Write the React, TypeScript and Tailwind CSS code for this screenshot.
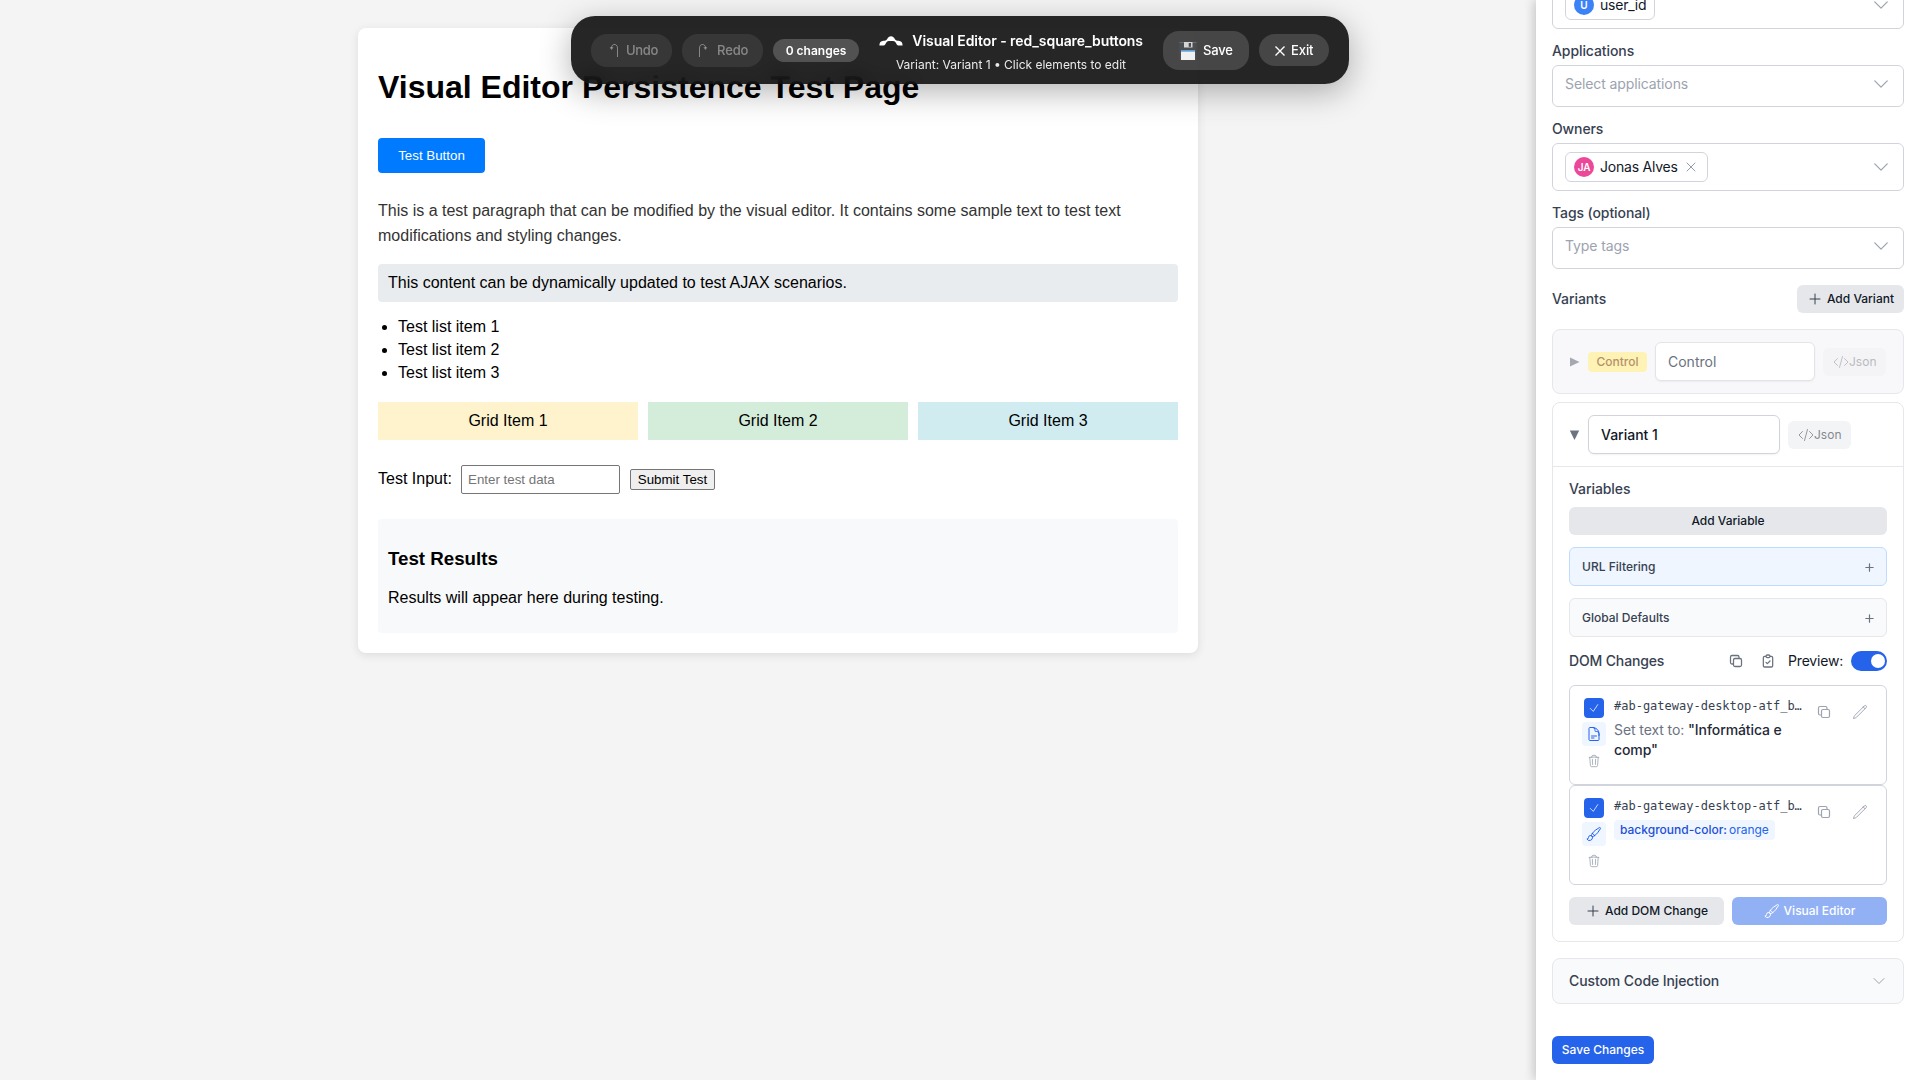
import type { ReactNode } from "react";

type IconProps = { d: string; className?: string; strokeWidth?: number };

function Icon({ d, className = "size-4", strokeWidth = 1.5 }: IconProps) {
  return (
    <svg
      viewBox="0 0 24 24"
      fill="none"
      stroke="currentColor"
      strokeWidth={strokeWidth}
      strokeLinecap="round"
      strokeLinejoin="round"
      className={`shrink-0 ${className}`}
    >
      <path d={d} />
    </svg>
  );
}

const paths = {
  chevron: "m19.5 8.25-7.5 7.5-7.5-7.5",
  close: "M6 18 18 6M6 6l12 12",
  plus: "M12 4.5v15m7.5-7.5h-15",
  smallPlus: "M12 4v16M4 12h16",
  code: "M17.25 6.75 22.5 12l-5.25 5.25m-10.5 0L1.5 12l5.25-5.25m7.5-3-4.5 16.5",
  copy: "M16.5 8.25V6a2.25 2.25 0 0 0-2.25-2.25H6A2.25 2.25 0 0 0 3.75 6v8.25A2.25 2.25 0 0 0 6 16.5h2.25m8.25-8.25H18a2.25 2.25 0 0 1 2.25 2.25V18A2.25 2.25 0 0 1 18 20.25h-7.5A2.25 2.25 0 0 1 8.25 18v-1.5m8.25-8.25h-6a2.25 2.25 0 0 0-2.25 2.25v6",
  clipboard:
    "M9 5H7a2 2 0 0 0-2 2v12a2 2 0 0 0 2 2h10a2 2 0 0 0 2-2V7a2 2 0 0 0-2-2h-2M9 5a2 2 0 0 0 2 2h2a2 2 0 0 0 2-2M9 5a2 2 0 0 1 2-2h2a2 2 0 0 1 2 2m-6 9 2 2 4-4",
  check: "m4.5 12.75 6 6 9-13.5",
  document:
    "M19.5 14.25v-2.625a3.375 3.375 0 0 0-3.375-3.375h-1.5A1.125 1.125 0 0 1 13.5 7.125v-1.5a3.375 3.375 0 0 0-3.375-3.375H8.25m0 12.75h7.5m-7.5 3H12M10.5 2.25H5.625c-.621 0-1.125.504-1.125 1.125v17.25c0 .621.504 1.125 1.125 1.125h12.75c.621 0 1.125-.504 1.125-1.125V11.25a9 9 0 0 0-9-9Z",
  brush:
    "M9.53 16.122a3 3 0 0 0-5.78 1.128 2.25 2.25 0 0 1-2.4 2.245 4.5 4.5 0 0 0 8.4-2.245c0-.399-.078-.78-.22-1.128Zm0 0a15.998 15.998 0 0 0 3.388-1.62m-5.043-.025a15.994 15.994 0 0 1 1.622-3.395m3.42 3.42a15.995 15.995 0 0 0 4.764-4.648l3.876-5.814a1.151 1.151 0 0 0-1.597-1.597L14.146 6.32a15.996 15.996 0 0 0-4.649 4.763m3.42 3.42a6.776 6.776 0 0 0-3.42-3.42",
  trash:
    "m14.74 9-.346 9m-4.788 0L9.26 9m9.968-3.21c.342.052.682.107 1.022.166m-1.022-.165L18.16 19.673a2.25 2.25 0 0 1-2.244 2.077H8.084a2.25 2.25 0 0 1-2.244-2.077L4.772 5.79m14.456 0a48.108 48.108 0 0 0-3.478-.397m-12 .562c.34-.059.68-.114 1.022-.165m0 0a48.11 48.11 0 0 1 3.478-.397m7.5 0v-.916c0-1.18-.91-2.164-2.09-2.201a51.964 51.964 0 0 0-3.32 0c-1.18.037-2.09 1.022-2.09 2.201v.916m7.5 0a48.667 48.667 0 0 0-7.5 0",
  pencil:
    "m16.862 4.487 1.687-1.688a1.875 1.875 0 1 1 2.652 2.652L6.832 19.82a4.5 4.5 0 0 1-1.897 1.13l-2.685.8.8-2.685a4.5 4.5 0 0 1 1.13-1.897L16.863 4.487Zm0 0L19.5 7.125",
};

function TurnArrow({ className = "" }: { className?: string }) {
  return (
    <svg viewBox="0 0 10 16" className={`h-4 w-2.5 shrink-0 ${className}`} fill="none" stroke="currentColor">
      <path d="M9.5 14V5.2c0-2.3-1.2-3.7-3-3.7-1.8 0-2.9 1.3-3 3.3" strokeWidth="1" />
      <path d="M1.7 4.3h3.9L3.5 7Z" fill="currentColor" stroke="none" />
    </svg>
  );
}

function FloppyDisk() {
  return (
    <svg viewBox="0 0 18 18" className="size-[18px] shrink-0">
      <path d="M.5 0h17v18h-17z" fill="#4c4f52" />
      <path d="M.5 0h17v1h-17z" fill="#6a6d70" />
      <path d="M5 0h8.5v5.5H5z" fill="#d3d5d7" />
      <path d="M9.7 1H12v3.8H9.7z" fill="#4a4d50" />
      <path d="M2 8h14v10H2z" fill="#f1f1f1" />
      <path d="M2 8h14v1.7H2z" fill="#5f9fd6" />
    </svg>
  );
}

function Toolbar() {
  return (
    <div className="absolute left-[571px] top-4 z-10 flex h-[68px] w-[778px] items-center rounded-[24px] bg-black/85 px-5 text-[13px] font-medium text-white shadow-[0_8px_32px_rgba(0,0,0,0.3)] backdrop-blur-[10px]">
      <button className="flex h-[33px] w-[81px] items-center gap-2 rounded-[16px] bg-white/8 pl-[17px] pt-px tracking-[-0.3px] text-white/40">
        <TurnArrow />
        Undo
      </button>
      <button className="ml-2.5 flex h-[33px] w-[81px] items-center gap-2 rounded-[16px] bg-white/8 pl-[17px] pt-px tracking-[-0.1px] text-white/40">
        <TurnArrow className="-scale-x-100" />
        Redo
      </button>
      <span className="ml-2.5 flex h-[23px] w-[86px] items-center justify-center rounded-full bg-white/20 pt-px text-xs font-semibold">
        0 changes
      </span>
      <div className="ml-5 flex w-[264px] flex-col items-center pt-[5px]">
        <div className="flex w-full items-center justify-between whitespace-nowrap text-sm font-semibold leading-[22px] tracking-[-0.06px]">
          <svg viewBox="0 0 24 12" className="h-3 w-6 shrink-0" fill="currentColor">
            <path d="M.4 10.6c0-3 1.4-4.6 4-4.8 1.7-.1 2.7-.3 3.8-1.9C9.3 2.3 10.2 1.3 12 1.3s2.7 1 3.8 2.6c1.1 1.6 2.1 1.8 3.8 1.9 2.6.2 4 1.8 4 4.8h-4.2c-1.3 0-1.7-1.2-2.3-2.3-.8-1.5-1.7-2.3-3-2.3H9.9c-1.3 0-2.2.8-3 2.3-.6 1.1-1 2.3-2.3 2.3Z" />
          </svg>
          Visual Editor - red_square_buttons
        </div>
        <div className="mt-0.5 whitespace-nowrap text-xs font-normal leading-[22px] text-white/90">
          Variant: Variant 1 • Click elements to edit
        </div>
      </div>
      <button className="ml-5 flex h-[39px] w-[86px] items-center gap-1.5 rounded-[16px] bg-white/15 pl-4 pt-px tracking-[-0.15px]">
        <FloppyDisk />
        Save
      </button>
      <button className="ml-2.5 flex h-8 w-[70px] items-center gap-1.5 rounded-[16px] bg-white/15 pl-4 pt-px tracking-[-0.1px]">
        <svg viewBox="0 0 10 10" className="size-2.5 shrink-0" stroke="currentColor" strokeWidth="1.4">
          <path d="M.5.5l9 9M9.5.5l-9 9" />
        </svg>
        Exit
      </button>
    </div>
  );
}

function TestPage() {
  return (
    <section className="ml-[358px] mt-7 h-[625px] w-[840px] rounded-lg bg-white px-5 pt-[41px] font-['Liberation_Sans',Arial,sans-serif] text-base leading-[18px] text-black shadow-[0_2px_10px_rgba(0,0,0,0.1)]">
      <h1 className="text-[32px] font-bold leading-[37px]">Visual Editor Persistence Test Page</h1>
      <button className="mt-8 flex h-[35px] w-[107px] items-center justify-center rounded bg-[#007bff] text-[13.333px] text-white">
        Test Button
      </button>
      <p className="mt-[25px] h-[51px] leading-[25px] text-[#333]">
        This is a test paragraph that can be modified by the visual editor. It contains some sample text to test text
        modifications and styling changes.
      </p>
      <div className="mt-[15px] rounded bg-[#e9ecef] p-2.5">
        This content can be dynamically updated to test AJAX scenarios.
      </div>
      <ul className="mt-4 list-disc space-y-[5px] pl-5">
        <li>Test list item 1</li>
        <li>Test list item 2</li>
        <li>Test list item 3</li>
      </ul>
      <div className="mt-5 grid grid-cols-3 gap-2.5 text-center">
        <div className="bg-[#fff3cd] p-2.5">Grid Item 1</div>
        <div className="bg-[#d4edda] p-2.5">Grid Item 2</div>
        <div className="bg-[#d1ecf1] p-2.5">Grid Item 3</div>
      </div>
      <div className="mt-[25px] flex h-[29px] items-center">
        <label className="w-[83px] pb-px">Test Input:</label>
        <input
          placeholder="Enter test data"
          className="h-[29px] w-[159px] rounded-[2px] border border-[#767676] bg-white px-1.5 text-[13.333px] placeholder:text-[#757575]"
        />
        <button className="ml-2.5 h-[21px] w-[85px] rounded-[2px] border border-[#767676] bg-[#efefef] pt-px text-[13.333px] leading-[18px]">
          Submit Test
        </button>
      </div>
      <div className="mt-[25px] h-[114px] rounded bg-[#f8f9fa] px-2.5 pt-[29px]">
        <h3 className="text-[18.72px] font-bold leading-[21px]">Test Results</h3>
        <p className="mt-5">Results will appear here during testing.</p>
      </div>
    </section>
  );
}

function Label({ children, className = "tracking-[-0.09px]" }: { children: ReactNode; className?: string }) {
  return <div className={`text-sm font-medium text-[#374151] ${className}`}>{children}</div>;
}

function SelectBox({ children, className = "" }: { children: ReactNode; className?: string }) {
  return (
    <div
      className={`flex items-start justify-between rounded-md border border-[#d1d5db] bg-white px-3 pt-2 text-sm tracking-[-0.1px] ${className}`}
    >
      {children}
    </div>
  );
}

type ChipProps = { initials: string; name: string; color: string; removable?: boolean };

function Chip({ initials, name, color, removable }: ChipProps) {
  return (
    <div className="flex h-[30px] items-center rounded-md border border-[#d1d5db] px-2 text-[#111827]">
      <span
        className={`mr-1.5 flex size-5 items-center justify-center rounded-full text-[10px] font-semibold text-white ${color}`}
      >
        {initials}
      </span>
      <span className="tracking-[-0.22px]">{name}</span>
      {removable && <Icon d={paths.close} className="ml-[5px] size-4 text-[#8b93a1]" strokeWidth={1.4} />}
    </div>
  );
}

function Chevron({ className = "size-5" }: { className?: string }) {
  return <Icon d={paths.chevron} className={`text-[#9ca3af] ${className}`} />;
}

function JsonButton({ className = "" }: { className?: string }) {
  return (
    <button className={`ml-2 flex h-7 items-center rounded-md px-2.5 text-xs ${className}`}>
      <Icon d={paths.code} strokeWidth={1.3} />
      Json
    </button>
  );
}

function Accordion({ title, className }: { title: string; className: string }) {
  return (
    <div className={`mt-3 flex h-[39px] items-center justify-between rounded-md border px-3 ${className}`}>
      <span className="text-xs font-medium text-[#374151]">{title}</span>
      <Icon d={paths.smallPlus} strokeWidth={2.6} className="-mr-px mt-0.5 size-[11px] text-[#6b7280]" />
    </div>
  );
}

function ChangeCard({ icon, children }: { icon: string; children: ReactNode }) {
  return (
    <div className="flex h-[100px] rounded-md border border-[#d1d5db] bg-white pl-3 pt-3">
      <div className="flex w-6 flex-col items-center">
        <span className="flex size-5 items-center justify-center rounded bg-[#2563eb] text-white">
          <Icon d={paths.check} className="size-3" />
        </span>
        <span className="mt-1 flex size-6 items-center justify-center rounded bg-[#eff6ff] text-[#2563eb]">
          <Icon d={icon} />
        </span>
        <Icon d={paths.trash} className="mt-2 size-[14px] text-[#9ca3af]" strokeWidth={1.4} />
      </div>
      <div className="ml-2 w-[192px]">
        <div className="h-4 whitespace-nowrap font-['DejaVu_Sans_Mono',monospace] text-xs leading-4 text-[#374151]">
          #ab-gateway-desktop-atf_b…
        </div>
        {children}
      </div>
      <Icon d={paths.copy} className="ml-[10px] mt-1.5 size-4 text-[#9ca3af]" strokeWidth={1.8} />
      <Icon d={paths.pencil} className="ml-5 mt-1.5 size-4 text-[#9ca3af]" strokeWidth={1.4} />
    </div>
  );
}

function Sidebar() {
  return (
    <aside className="absolute right-0 top-0 h-[1080px] w-96 bg-white shadow-[-2px_0_10px_rgba(0,0,0,0.2)]">
      <div className="h-full overflow-hidden px-4">
        <SelectBox className="-mt-[19px] h-12">
          <Chip initials="U" name="user_id" color="bg-[#3b82f6]" />
          <Chevron className="mt-[5px] size-5" />
        </SelectBox>

        <Label className="mt-3 tracking-[-0.09px]">Applications</Label>
        <SelectBox className="mt-1 h-[42px] text-[#9ca3af]">
          Select applications
          <Chevron />
        </SelectBox>

        <Label className="mt-3 tracking-[-0.12px]">Owners</Label>
        <SelectBox className="mt-1 h-12">
          <Chip initials="JA" name="Jonas Alves" color="bg-[#ec4899]" removable />
          <Chevron className="mt-[5px] size-5" />
        </SelectBox>

        <Label className="mt-3 tracking-[-0.09px]">Tags (optional)</Label>
        <SelectBox className="mt-1 h-[42px] text-[#9ca3af]">
          Type tags
          <Chevron />
        </SelectBox>

        <div className="mt-4 flex h-7 items-center justify-between">
          <Label>Variants</Label>
          <button className="flex h-7 items-center gap-1 rounded-md bg-[#e5e7eb] px-2.5 text-xs font-medium text-[#111827]">
            <Icon d={paths.plus} className="size-4 text-[#374151]" />
            Add Variant
          </button>
        </div>

        <div className="mt-4 flex h-[65px] items-center rounded-lg border border-[#e5e7eb] bg-[#f8f8fa] pl-4">
          <svg viewBox="0 0 11 10" className="h-2.5 w-[11px] shrink-0">
            <path d="M1 .5 10.5 5 1 9.5Z" fill="#a3a8b1" />
          </svg>
          <span className="ml-2 flex h-5 w-[59px] items-center justify-center rounded bg-[#fef3b5] text-xs font-medium text-[#b5916a]">
            Control
          </span>
          <div className="ml-2 flex h-[39px] w-40 items-center rounded-md border border-[#e2e4e8] bg-white px-3 text-sm text-[#6b7280] shadow-xs">
            Control
          </div>
          <JsonButton className="bg-[#f4f4f6] text-[#b8bac0]" />
        </div>

        <div className="mt-2 h-[540px] rounded-lg border border-[#e5e7eb] bg-white">
          <div className="flex h-16 items-center border-b border-[#e5e7eb] pb-0.5 pl-4 pt-0.5">
            <svg viewBox="0 0 11 10" className="h-2.5 w-[11px] shrink-0">
              <path d="M.8.5h9.4L5.5 10Z" fill="#6b7280" />
            </svg>
            <div className="ml-2 flex h-[39px] w-48 items-center rounded-md border border-[#d1d5db] bg-white px-3 text-sm font-medium text-[#111827] shadow-xs">
              Variant 1
            </div>
            <JsonButton className="bg-[#f3f4f6] text-[#85898f]" />
          </div>

          <div className="px-4 pt-3">
            <Label>Variables</Label>
            <button className="mt-2 h-7 w-full rounded-md bg-[#e5e7eb] text-xs font-medium text-[#111827]">
              Add Variable
            </button>
            <Accordion title="URL Filtering" className="border-[#bfdbfe] bg-[#eff6ff]" />
            <Accordion title="Global Defaults" className="border-[#e5e7eb] bg-[#f9fafb]" />

            <div className="mt-[14px] flex h-5 items-center">
              <Label className="tracking-[-0.15px]">DOM Changes</Label>
              <Icon d={paths.copy} className="ml-auto size-4 text-[#6b7280]" strokeWidth={1.9} />
              <Icon d={paths.clipboard} className="ml-4 size-4 text-[#6b7280]" strokeWidth={1.9} />
              <span className="ml-3 text-sm tracking-[-0.2px] text-[#111827]">Preview:</span>
              <span className="ml-2 flex h-5 w-9 items-center justify-end rounded-full bg-[#2563eb] pr-[2px]">
                <span className="size-[14px] rounded-full bg-white" />
              </span>
            </div>

            <div className="mt-[14px]">
              <ChangeCard icon={paths.document}>
                <p className="mt-1.5 text-sm tracking-[-0.09px] text-[#6b7280]">
                  Set text to: <span className="font-medium text-[#1f2937]">&quot;Informática e comp&quot;</span>
                </p>
              </ChangeCard>
              <ChangeCard icon={paths.brush}>
                <span className="mt-1.5 flex h-5 w-[161px] items-center gap-0.5 whitespace-nowrap rounded bg-[#eff6ff] px-1.5 text-xs text-[#2563eb]">
                  <span className="font-medium text-[#1d4ed8]">background-color:</span>
                  orange
                </span>
              </ChangeCard>
            </div>

            <div className="mt-3 flex gap-2 text-xs font-medium">
              <button className="flex h-7 flex-1 items-center justify-center gap-1 rounded-md bg-[#e5e7eb] text-[#111827]">
                <Icon d={paths.plus} className="size-4 text-[#374151]" />
                Add DOM Change
              </button>
              <button className="flex h-7 flex-1 items-center justify-center gap-1 rounded-md bg-[#92b1f5] text-white">
                <Icon d={paths.brush} />
                Visual Editor
              </button>
            </div>
          </div>
        </div>

        <div className="mt-4 flex h-[46px] items-center justify-between rounded-lg border border-[#e5e7eb] bg-[#f9fafb] px-4">
          <Label>Custom Code Injection</Label>
          <Chevron className="size-4" />
        </div>

        <button className="mt-8 h-7 w-[102px] rounded-md bg-[#2563eb] text-xs font-medium text-white">
          Save Changes
        </button>
      </div>
    </aside>
  );
}

export default function App() {
  return (
    <div className="relative flow-root h-[1080px] w-[1920px] overflow-hidden bg-[#f4f4f4] font-[Inter,sans-serif]">
      <TestPage />
      <Toolbar />
      <Sidebar />
    </div>
  );
}
